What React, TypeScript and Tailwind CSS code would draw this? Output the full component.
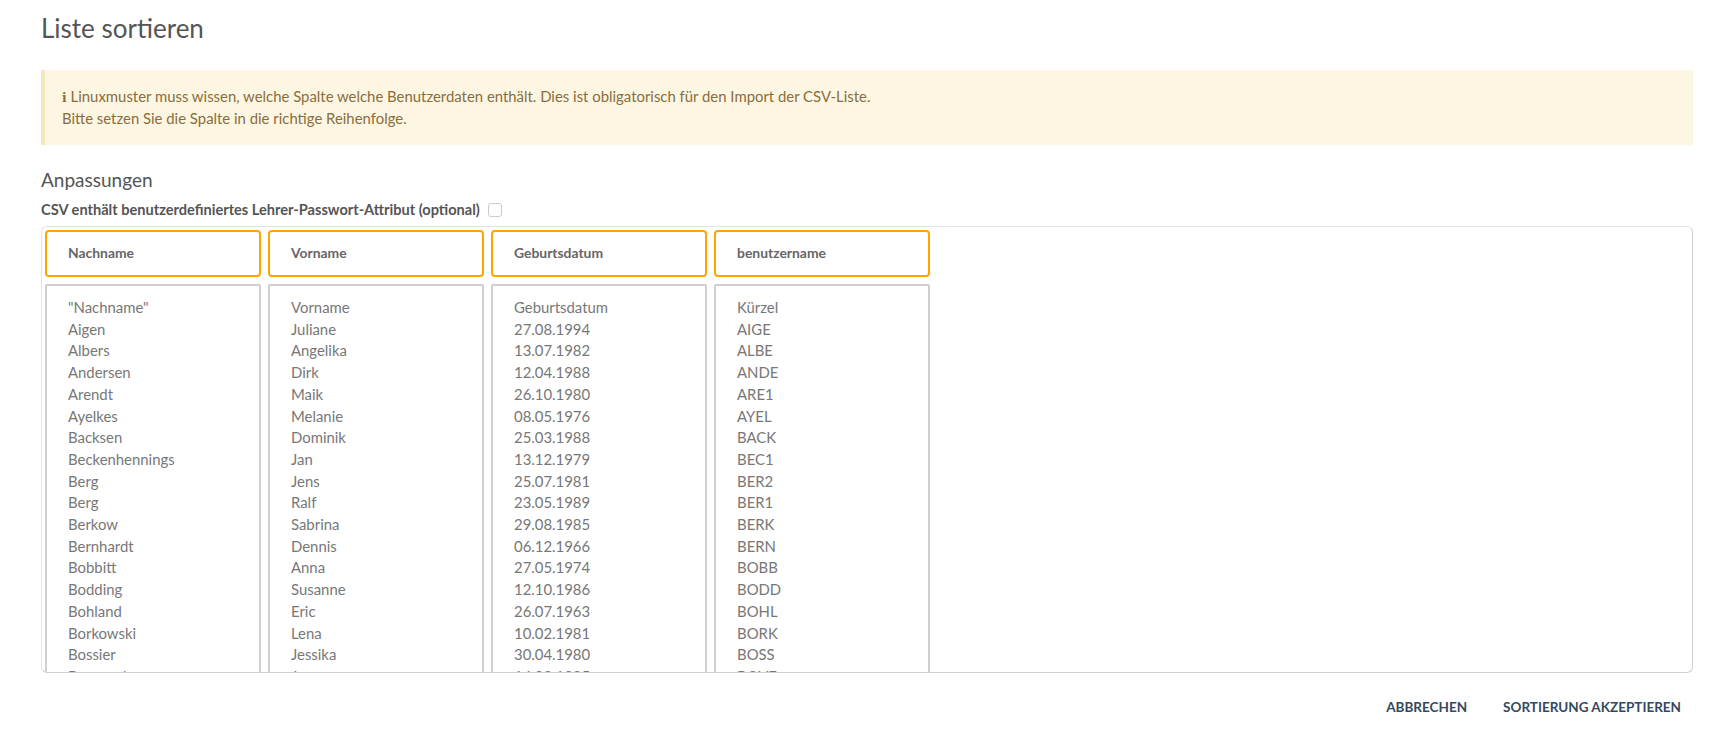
import React from "react";

const columns = [
  {
    title: "Nachname",
    rows: [
      '"Nachname"', "Aigen", "Albers", "Andersen", "Arendt", "Ayelkes", "Backsen",
      "Beckenhennings", "Berg", "Berg", "Berkow", "Bernhardt", "Bobbitt", "Bodding",
      "Bohland", "Borkowski", "Bossier", "Bovenschen",
    ],
  },
  {
    title: "Vorname",
    rows: [
      "Vorname", "Juliane", "Angelika", "Dirk", "Maik", "Melanie", "Dominik", "Jan",
      "Jens", "Ralf", "Sabrina", "Dennis", "Anna", "Susanne", "Eric", "Lena",
      "Jessika", "Jana",
    ],
  },
  {
    title: "Geburtsdatum",
    rows: [
      "Geburtsdatum", "27.08.1994", "13.07.1982", "12.04.1988", "26.10.1980",
      "08.05.1976", "25.03.1988", "13.12.1979", "25.07.1981", "23.05.1989",
      "29.08.1985", "06.12.1966", "27.05.1974", "12.10.1986", "26.07.1963",
      "10.02.1981", "30.04.1980", "14.09.1985",
    ],
  },
  {
    title: "benutzername",
    rows: [
      "Kürzel", "AIGE", "ALBE", "ANDE", "ARE1", "AYEL", "BACK", "BEC1", "BER2",
      "BER1", "BERK", "BERN", "BOBB", "BODD", "BOHL", "BORK", "BOSS", "BOVE",
    ],
  },
];

export default function App() {
  return (
    <div
      className="min-h-screen bg-white px-[41px] text-[#6f6f6f]"
      style={{ fontFamily: "Lato, 'Liberation Sans', sans-serif" }}
    >
      <h1 className="pt-[11px] text-[26px] leading-[34px] text-[#555]">Liste sortieren</h1>

      {/* Alert */}
      <div className="mt-[25px] mr-[-24px] border-l-4 border-[#f6e7c1] bg-[#fdf6e3] px-[17px] pt-[15px] pb-[16px] text-[14.9px] leading-[22px] text-[#8a6d3b]">
        <div className="h-[22px]">
          <span className="mr-1 font-serif font-bold leading-none">i</span>
          Linuxmuster muss wissen, welche Spalte welche Benutzerdaten enthält. Dies ist obligatorisch für den Import der CSV-Liste.
        </div>
        <div>Bitte setzen Sie die Spalte in die richtige Reihenfolge.</div>
      </div>

      <h2 className="mt-[22px] text-[19px] leading-[26px] text-[#555]">Anpassungen</h2>

      <label className="mt-[7px] flex items-center gap-2 text-[14.6px] font-bold leading-[20px] text-[#555]">
        CSV enthält benutzerdefiniertes Lehrer-Passwort-Attribut (optional)
        <span className="inline-block h-[14px] w-[14px] rounded-[3px] border border-[#ccc] bg-white" />
      </label>

      {/* Sort container */}
      <div className="mt-[6px] mr-[-24px] h-[447px] overflow-hidden rounded-[6px] border border-[#e3e3e3] border-r-[#cfcfcf] border-b-[#cfcfcf] p-[3px]">
        <div className="flex gap-[7px]">
          {columns.map((col) => (
            <div key={col.title} className="flex w-[216px] flex-col gap-[7px]">
              <div className="flex h-[47px] items-center rounded-[4px] border-2 border-[#ffa500] px-[21px] text-[13.9px] font-bold text-[#666]">
                {col.title}
              </div>
              <div className="rounded-[2px] border-2 border-[#cfcfcf] px-[21px] pt-[11px] pb-4 text-[14.9px] leading-[21.7px] text-[#777]">
                {col.rows.map((r, i) => (
                  <div key={i}>{r}</div>
                ))}
              </div>
            </div>
          ))}
        </div>
      </div>

      <div className="mr-[-12px] flex justify-end gap-[36px] pt-[24px] text-[13.5px] font-bold text-[#34495e]">
        <button className="uppercase">Abbrechen</button>
        <button className="uppercase">Sortierung akzeptieren</button>
      </div>
    </div>
  );
}
